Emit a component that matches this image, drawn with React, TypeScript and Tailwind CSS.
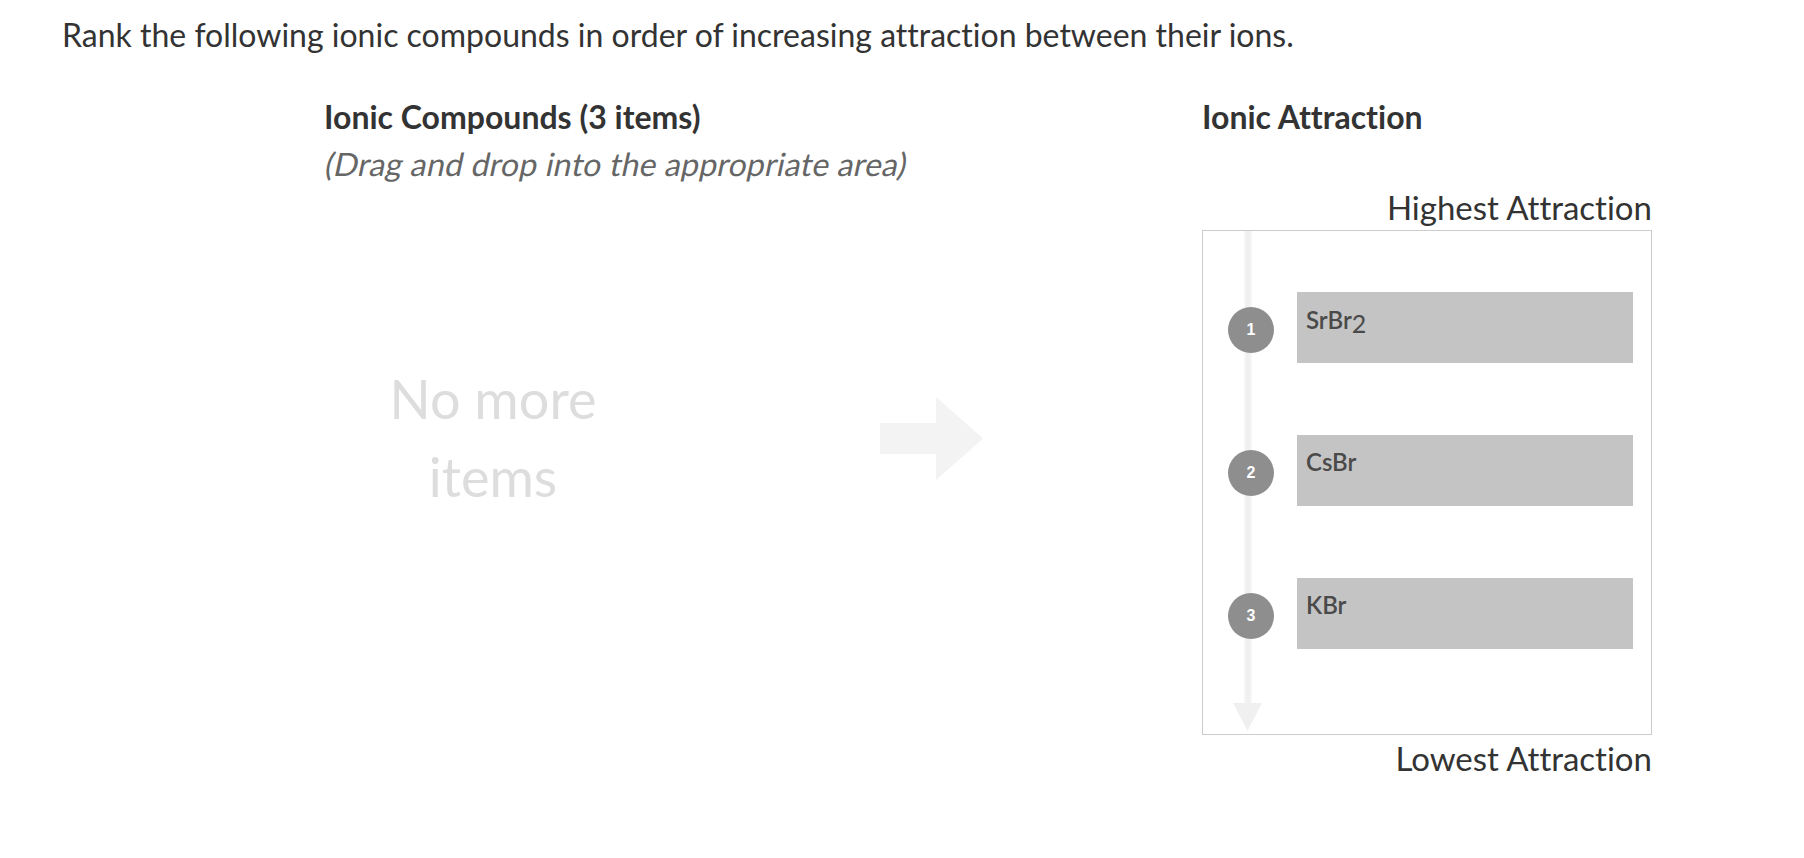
import React from "react";

type RankItem = {
  rank: number;
  label: React.ReactNode;
};

const rankedItems: RankItem[] = [
  {
    rank: 1,
    label: (
      <>
        SrBr<span className="relative top-[4px] text-[25px] font-normal">2</span>
      </>
    ),
  },
  { rank: 2, label: "CsBr" },
  { rank: 3, label: "KBr" },
];

function RightArrow() {
  return (
    <svg width="103" height="83" viewBox="0 0 103 83">
      <polygon points="0,26 56,26 56,0 103,41.5 56,83 56,57 0,57" fill="#f3f3f3" />
    </svg>
  );
}

function RankRow({ item }: { item: RankItem }) {
  return (
    <div className="flex items-center pl-[25px]">
      <div className="mt-[4px] flex h-[46px] w-[46px] shrink-0 items-center justify-center rounded-full bg-[#8e8e8e] text-[16px] font-bold text-white [font-family:'Liberation_Sans',Arial,sans-serif]">
        {item.rank}
      </div>
      <div className="ml-[23px] h-[71px] w-[336px] bg-[#c4c4c4] px-[9px] pt-[12px] text-[24px] leading-[30px] font-semibold text-[#4a4a4a]">
        {item.label}
      </div>
    </div>
  );
}

export default function App() {
  return (
    <div className="min-h-screen bg-white text-[#333] [font-family:Lato,sans-serif] [font-variant-ligatures:none]">
      <p className="pl-[62px] pt-[16px] text-[32px] leading-[38px]">
        Rank the following ionic compounds in order of increasing attraction between their ions.
      </p>

      <div className="mt-[44px] ml-[326px] flex">
        {/* source list */}
        <div className="w-[334px] shrink-0">
          <h3 className="-ml-[2px] whitespace-nowrap text-[32px] leading-[38px] font-bold">Ionic Compounds (3 items)</h3>
          <p className="mt-[9px] whitespace-nowrap text-[32px] leading-[38px] tracking-[0.2px] text-[#666]">
            <span className="inline-block skew-x-[-12deg]">(Drag and drop into the appropriate area)</span>
          </p>
          <div className="-mt-[6px] flex h-[522px] items-center justify-center">
            <p className="w-[260px] text-center text-[54px] leading-[78px] text-[#dddddd]">No more items</p>
          </div>
        </div>

        <div className="ml-[220px] shrink-0 pt-[299px]">
          <RightArrow />
        </div>

        {/* ranking target */}
        <div className="ml-[219px] w-[450px] shrink-0">
          <h3 className="text-[32px] leading-[38px] font-bold">Ionic Attraction</h3>
          <p className="mt-[52px] text-right text-[33px] leading-[38px]">Highest Attraction</p>
          <div className="relative mt-[4px] h-[505px] border border-[#cccccc]">
            <div className="absolute top-0 left-[30px] flex h-full w-[29px] flex-col items-center">
              <div className="h-[472px] w-[8px] bg-linear-to-r from-[#f8f8f8] via-[#eeeeee] to-[#f8f8f8]" />
              <svg width="29" height="28" viewBox="0 0 29 28">
                <polygon points="0,0 29,0 14.5,28" fill="#f0f0f0" />
              </svg>
            </div>
            <div className="relative flex flex-col gap-[72px] pt-[61px]">
              {rankedItems.map((item) => (
                <RankRow key={item.rank} item={item} />
              ))}
            </div>
          </div>
          <p className="mt-[4px] text-right text-[33px] leading-[38px]">Lowest Attraction</p>
        </div>
      </div>
    </div>
  );
}
